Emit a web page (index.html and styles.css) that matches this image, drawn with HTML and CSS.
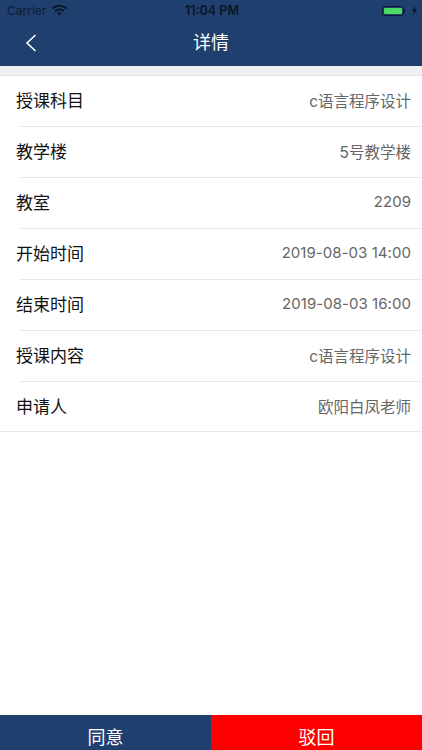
FILE: index.html
```html
<!DOCTYPE html>
<html lang="zh-CN">
<head>
<meta charset="utf-8">
<title>详情</title>
<link rel="stylesheet" href="styles.css">
</head>
<body>
<div class="app">
  <header class="header">
    <div class="status">
      <div class="status-left">
        <span>Carrier</span>
        <svg class="wifi" width="15" height="11" viewBox="0 0 15 11"><path d="M7.5 10.6 5.3 8.300a3.1 3.1 0 0 1 4.4 0zM3.9 6.9 2.600 5.500a7 7 0 0 1 9.800 0l-1.300 1.400a5.100 5.100 0 0 0-7.200 0zM1.300 4.200 0 2.900a10.600 10.600 0 0 1 15 0l-1.300 1.300a8.700 8.700 0 0 0-12.400 0z"/></svg>
      </div>
      <div class="status-time">11:04 PM</div>
      <div class="status-right">
        <span class="battery"><span class="battery-fill"></span></span>
        <span class="battery-tip"></span>
        <svg class="bolt" width="5" height="9" viewBox="0 0 5 9"><path d="M3.200 0 0 5h2l-.4 4L5 3.600H2.900z"/></svg>
      </div>
    </div>
    <div class="nav">
      <svg class="back" width="12" height="18" viewBox="0 0 12 18"><path d="M10.500 1 2 9l8.500 8"/></svg>
      <div class="nav-title">详情</div>
    </div>
  </header>
  <div class="spacer"></div>
  <main class="list">
    <div class="row"><span class="label">授课科目</span><span class="value">c语言程序设计</span></div>
    <div class="row"><span class="label">教学楼</span><span class="value">5号教学楼</span></div>
    <div class="row"><span class="label">教室</span><span class="value value-num">2209</span></div>
    <div class="row"><span class="label">开始时间</span><span class="value value-num">2019-08-03 14:00</span></div>
    <div class="row"><span class="label">结束时间</span><span class="value value-num">2019-08-03 16:00</span></div>
    <div class="row"><span class="label">授课内容</span><span class="value">c语言程序设计</span></div>
    <div class="row"><span class="label">申请人</span><span class="value">欧阳白凤老师</span></div>
  </main>
  <footer class="actions">
    <div class="action agree">同意</div>
    <div class="action reject">驳回</div>
  </footer>
</div>
</body>
</html>
```
FILE: styles.css
```css
* { box-sizing: border-box; }
html, body { margin: 0; padding: 0; }
body {
  width: 422px;
  height: 750px;
  overflow: hidden;
  background: #fff;
  font-family: "Inter", "Noto Sans CJK SC", sans-serif;
}
.app { display: flex; flex-direction: column; height: 750px; }
.header { height: 66px; background: #1f3f6e; flex: none; }
.status {
  height: 21px;
  padding: 0 5px 0 7px;
  display: grid;
  grid-template-columns: 1fr auto 1fr;
  align-items: center;
  font-size: 12px;
  color: #0e1d33;
}
.status-left { display: flex; align-items: center; gap: 6px; }
.wifi { fill: #0a1526; }
.status-time { font-weight: 600; font-size: 12.5px; color: #0a1526; }
.status-right { display: flex; align-items: center; justify-content: flex-end; }
.battery {
  width: 22px;
  height: 10px;
  border: 1px solid #0e1d33;
  border-radius: 3px;
  padding: 1px;
  display: flex;
}
.battery-fill { flex: 1; background: #4cd964; border-radius: 1px; }
.battery-tip { width: 1px; height: 4px; background: #0e1d33; margin-right: 7px; }
.bolt { fill: #0a1526; }
.nav { height: 45px; display: flex; align-items: center; justify-content: center; position: relative; padding-bottom: 5px; }
.back { position: absolute; left: 25px; top: 13px; fill: none; stroke: #fff; stroke-width: 1.6; }
.nav-title { font-size: 18px; color: #fff; }
.spacer { height: 10px; background: #f0f0f3; border-bottom: 1px solid #e4e4e6; flex: none; }
.list { flex: 1; }
.row {
  height: 51px;
  padding: 0 11px 4px 16px;
  display: flex;
  align-items: center;
  justify-content: space-between;
  position: relative;
}
.row:last-child { height: 50px; padding-bottom: 3px; }
.row::after {
  content: "";
  position: absolute;
  left: 20px;
  right: 0;
  bottom: 0;
  height: 1px;
  background: #e8e8e8;
}
.row:last-child::after { left: 0; }
.label { font-size: 17px; color: #111; }
.value { font-size: 15.5px; color: #666; }
.value-num { font-size: 15px; letter-spacing: 0.05px; }
.actions { height: 35px; display: flex; flex: none; }
.action {
  flex: 1;
  color: #fff;
  font-size: 18px;
  display: flex;
  justify-content: center;
  padding-top: 11px;
  line-height: 24px;
  overflow: hidden;
}
.agree { background: #1f3f6e; }
.reject { background: #ff0000; }
```
